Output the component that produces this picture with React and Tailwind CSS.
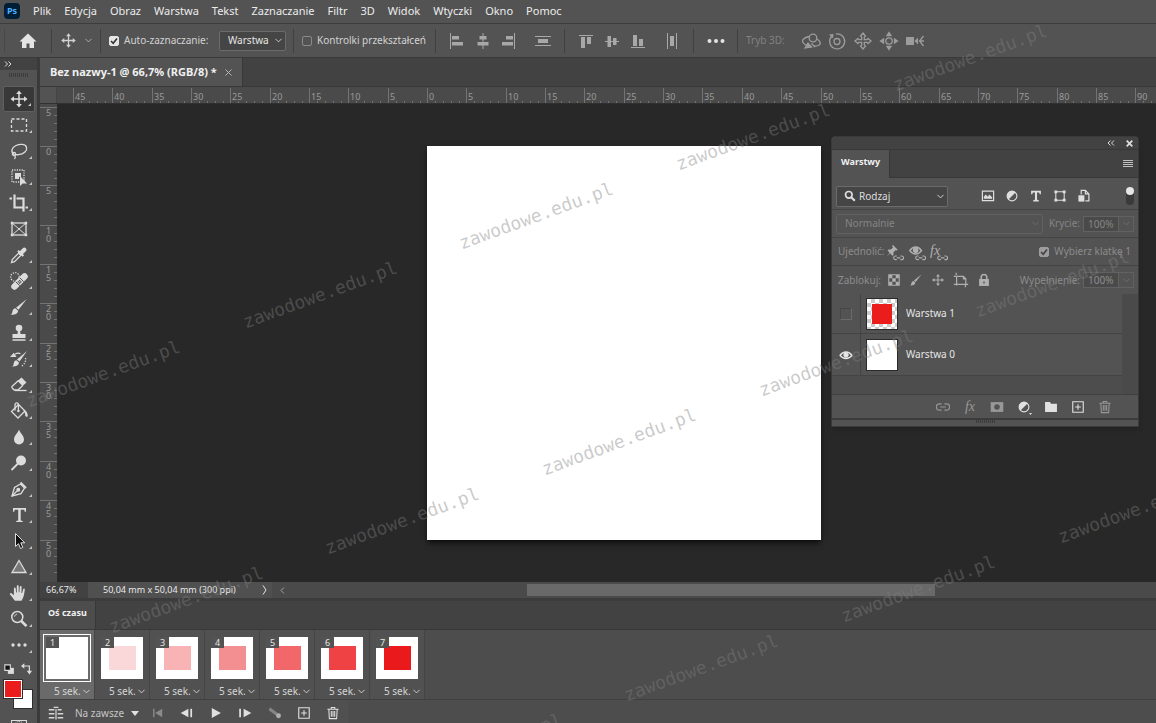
import { ChevronDown } from 'lucide-react'

const menuItems = ['Plik', 'Edycja', 'Obraz', 'Warstwa', 'Tekst', 'Zaznaczanie', 'Filtr', '3D', 'Widok', 'Wtyczki', 'Okno', 'Pomoc']

const frames = [
  { id: 1, color: '#ffffff' },
  { id: 2, color: '#fad7d8' },
  { id: 3, color: '#f8b3b5' },
  { id: 4, color: '#f48f91' },
  { id: 5, color: '#f2686a' },
  { id: 6, color: '#ee4244' },
  { id: 7, color: '#ea1a1c' },
]

const watermarks = [
  [970, 58], [753, 137], [536, 216], [320, 295], [103, 374],
  [1052, 284], [836, 363], [619, 442], [402, 521], [186, 600],
  [1135, 510], [918, 589], [701, 668], [485, 747],
]

function Icon({ size = 20, children }) {
  return (
    <svg width={size} height={size} viewBox="0 0 20 20" fill="none" stroke="currentColor" strokeWidth="1.3" className="shrink-0" aria-hidden="true">
      {children}
    </svg>
  )
}

function Chevron({ className = '' }) {
  return <ChevronDown size={11} strokeWidth={2} className={`shrink-0 pointer-events-none ${className}`} />
}

const moveIcon = (
  <Icon>
    <path d="M10 4v12M4 10h12" strokeWidth="1.5" />
    <path d="M10 1.5 12.8 5H7.2zM10 18.5 12.8 15H7.2zM1.5 10 5 7.2v5.6zM18.5 10 15 7.2v5.6z" fill="currentColor" stroke="none" />
  </Icon>
)

const brushIcon = (
  <Icon>
    <path d="M17.8 2 9.5 12.8 7 10.7z" fill="currentColor" stroke="none" />
    <path d="M6.3 11.3l2.8 2.4c-.2 3-3.2 4.3-7.6 4 2-1 1.6-2.7 2.2-4.3.5-1.2 1.5-1.9 2.6-2.1z" fill="currentColor" stroke="none" />
  </Icon>
)

const tools = [
  { name: 'Przesunięcie', active: true, icon: moveIcon },
  { name: 'Zaznaczanie prostokątne', icon: <Icon><rect x="2.5" y="4" width="15" height="12" strokeDasharray="3 2" /></Icon> },
  { name: 'Lasso', icon: <Icon><path d="M5 13.4C1.5 11 2.5 6.5 7 4.5s9.5-1.500 10.500 1.800-2.500 7-8 7.400c-1.500.1-3-.1-4-.4" /><circle cx="5" cy="13" r="1.6" /><path d="M5.800 14.300c.9 1.200.6 2.600-.3 3.700" /></Icon> },
  { name: 'Zaznaczanie obiektów', icon: <Icon><rect x="3" y="3" width="12" height="12" strokeDasharray="1.2 1.2" /><path d="M6 6h6v5l-2-1.500V12H6z" fill="currentColor" stroke="none" /><path d="M11 9v10l2.600-2.500H18z" fill="currentColor" stroke="none" /></Icon> },
  { name: 'Kadrowanie', icon: <Icon><path d="M5.500 1.500v13h9M0.500 5.500h2.500M7.500 5.500h7v13M16.500 14.500h2.500" strokeWidth="2.2" /></Icon> },
  { name: 'Ramka', plain: true, icon: <Icon><rect x="3" y="4" width="14" height="12" /><path d="M3 4l14 12M17 4 3 16" strokeWidth="1" /><path d="M1.800 2.800h2.500v2.500H1.800zM15.700 2.800h2.500v2.500h-2.500zM1.800 14.700h2.500v2.500H1.800zM15.700 14.700h2.500v2.500h-2.500z" fill="currentColor" stroke="none" /></Icon> },
  { name: 'Kroplomierz', icon: <Icon><path d="M2.500 17.500l.8-3 6.400-6.400 2.200 2.200-6.400 6.400z" /><path d="M9 5.800 14.300 11" strokeWidth="2.2" /><path d="M11.800 8.200 15.300 4.700" strokeWidth="4.2" strokeLinecap="round" /></Icon> },
  { name: 'Punktowy pędzel korygujący', icon: <Icon><circle cx="6" cy="6" r="4.3" strokeDasharray="1.2 1.3" /><path d="M5.500 15.500 15.500 5.500" strokeWidth="6.5" strokeLinecap="round" /><path d="M6.800 10.800l4 4M10.800 6.800l4 4" stroke="#535353" strokeWidth="1" /><path d="M9.300 10.800h.1M11.800 10.800h.1M10.600 9.600h.1M10.600 12h.1" stroke="#535353" strokeWidth="1.3" strokeLinecap="square" /></Icon> },
  { name: 'Pędzel', icon: brushIcon },
  { name: 'Stempel', icon: <Icon><circle cx="10" cy="5" r="3.3" fill="currentColor" stroke="none" /><path d="M9 7h2l.5 4h5v4h-13v-4h5zM3.500 16.300h13v1.500h-13z" fill="currentColor" stroke="none" /></Icon> },
  { name: 'Pędzel historii', icon: <Icon><path d="M18 2 10.500 12.500 8 10.500z" fill="currentColor" stroke="none" /><path d="M7.400 11.200l2.600 2.200c-.2 3-2.800 4.300-7 4.100 2-1 1.400-2.700 2-4.300.4-1.200 1.300-1.900 2.400-2z" fill="currentColor" stroke="none" /><path d="M1 8 4.800 3.800 7.500 8z" fill="currentColor" stroke="none" /><path d="M6 5.300c2-1.300 4-1.300 5.500-.5" strokeWidth="1.2" /><path d="M16.500 9c.6 3.500-1 6.600-4.500 8.500" strokeDasharray="1.2 1.5" /></Icon> },
  { name: 'Gumka', icon: <Icon><path d="M8.500 6 12.500 2.500 17.500 7.500 13.500 11z" fill="currentColor" stroke="none" /><path d="M9.500 5.500 3.200 11.200c-.6.600-.6 1.200 0 1.800l2 2h3.800l5-4.700" /><path d="M6 15.500h11.500" /></Icon> },
  { name: 'Wiadro z farbą', icon: <Icon><path d="M9.500 3.500 2.500 10.500l6.500 6.500 7-7z" /><path d="M6 9.500V4c0-2.800 3.400-2.800 3.400 0v6" /><circle cx="9.400" cy="10" r="1.3" fill="currentColor" stroke="none" /><path d="M14.500 9c3 .5 4.500 3.300 4.200 6.500-1.600.8-3 0-2.500-2.500" fill="currentColor" stroke="none" /></Icon> },
  { name: 'Rozmywanie', icon: <Icon><path d="M10 2.500c1 3.500 5 6 5 10a5 5 0 0 1-10 0c0-4 4-6.500 5-10z" fill="currentColor" stroke="none" /></Icon> },
  { name: 'Rozjaśnianie', icon: <Icon><circle cx="12" cy="7.5" r="5" fill="currentColor" stroke="none" /><path d="M9 10.500 2.500 17" strokeWidth="1.8" /></Icon> },
  { name: 'Pióro', icon: <Icon><path d="M3 17l2.500-8.500L11.500 5l4 4-3.500 5.700z" /><path d="M3 17l5.500-5.500" /><circle cx="9.300" cy="10.700" r="1.3" fill="currentColor" /><path d="M11.500 3.500l5.500 5.500" strokeWidth="2" /></Icon> },
  { name: 'Tekst', icon: <Icon><path d="M4 3h13v3.800h-1.200l-.6-2h-3.500v10.700l2 .4V17H7.200v-1.100l2-.4V4.800H5.700l-.5 2H4z" fill="currentColor" stroke="none" /></Icon> },
  { name: 'Zaznaczanie ścieżek', icon: <Icon><path d="M6.500 2.500v13l3-2.800 2 4.800 2.300-1-2-4.700h4z" fill="#111" strokeWidth="1" /></Icon> },
  { name: 'Trójkąt', icon: <Icon><path d="M10 3.500 17 15.500H3z" fill="#777" /></Icon> },
  { name: 'Rączka', icon: <Icon><path d="M6 17.800c-1.800-2-3.300-4.500-5-6.300-.6-.8.500-1.900 1.500-1.300l2.400 2V5.500c0-1.200 1.700-1.200 1.800 0l.4 4h.7V3.300c0-1.300 1.900-1.300 1.900 0v6h.7l.4-5.500c.1-1.200 1.900-1.100 1.800.1l-.2 6h.7l1-3.700c.4-1.100 1.900-.8 1.700.4-.5 3.700-.8 7.900-3.300 11.200z" fill="currentColor" stroke="none" /></Icon> },
  { name: 'Lupka', icon: <Icon><circle cx="8.3" cy="8" r="5.5" strokeWidth="1.5" /><path d="M5.600 7.600c.2-1.400 1.200-2.300 2.500-2.400" strokeWidth="1" /><path d="M12.300 12 17.500 17.200" strokeWidth="2.6" /></Icon> },
  { name: 'Więcej narzędzi', icon: <Icon><g fill="currentColor" stroke="none"><circle cx="4" cy="10" r="1.7" /><circle cx="10" cy="10" r="1.7" /><circle cx="16" cy="10" r="1.7" /></g></Icon> },
]

const alignGroupA = [
  { name: 'Wyrównaj do lewej', icon: <Icon><path d="M3.500 2v16" strokeWidth="1" /><path d="M5 5h7v3.500H5zM5 11h11v3.500H5z" fill="currentColor" stroke="none" /></Icon> },
  { name: 'Wyśrodkuj w poziomie', icon: <Icon><path d="M10 2v16" strokeWidth="1" /><path d="M6.500 5h7v3.500h-7zM4.500 11h11v3.500h-11z" fill="currentColor" stroke="none" /></Icon> },
  { name: 'Wyrównaj do prawej', icon: <Icon><path d="M15.500 2v16" strokeWidth="1" /><path d="M7 5h7v3.500H7zM3 11h11v3.500H3z" fill="currentColor" stroke="none" /></Icon> },
]

const alignGroupB = [
  { name: 'Wyrównaj do góry', icon: <Icon><path d="M3 4.500h14" strokeWidth="1" /><path d="M5 6h4v11H5zM11 6h4v7h-4z" fill="currentColor" stroke="none" /></Icon> },
  { name: 'Wyśrodkuj w pionie', icon: <Icon><path d="M3 10.500h14" strokeWidth="1" /><path d="M5.500 5h3.500v11H5.500zM11 7h3.500v7H11z" fill="currentColor" stroke="none" /></Icon> },
  { name: 'Wyrównaj do dołu', icon: <Icon><path d="M3 16.500h14" strokeWidth="1" /><path d="M5 4h4v11H5zM11 8h4v7h-4z" fill="currentColor" stroke="none" /></Icon> },
]

const icons3d = [
  { name: 'Obrót 3D', icon: <Icon><circle cx="12" cy="7" r="3.8" /><path d="M8 5.500C3 6.500.5 9 2 11.500c1 1.600 3 2.600 5 3M13.500 15c4 .3 6.500-1.500 5.500-4-.4-1-1.400-2-2.700-2.800M10.500 12.500 14 16" /><path d="M4 17l3-5 3.500 4z" fill="currentColor" /></Icon> },
  { name: 'Obracanie 3D', icon: <Icon><circle cx="10" cy="10.500" r="3" /><path d="M4.500 5.500A7.500 7.500 0 1 0 9 3" /><path d="M2 3.500 6.500 3 6 7.500z" fill="currentColor" stroke="none" /></Icon> },
  { name: 'Przeciąganie 3D', icon: <Icon><path d="M10 2 12.500 5 11.300 6v2.700H14L15 7.500l3 2.500-3 2.500-1-1.200h-2.700V14l1.200 1-2.500 3L7.500 15l1.200-1v-2.700H6L5 12.500 2 10 5 7.500l1 1.200h2.700V6L7.500 5z" /></Icon> },
  { name: 'Przesuwanie 3D', icon: <Icon><circle cx="10" cy="10" r="3.2" /><path d="M10 1.500 12 4.500H8zM10 18.500l2-3H8zM1.500 10l3-2v4zM18.500 10l-3-2v4z" fill="currentColor" /></Icon> },
  { name: 'Kamera 3D', icon: <Icon><path d="M1 6h8v8H1zM9.500 10 13 6.500v7z" fill="currentColor" stroke="none" /><path d="M18.500 5 14.500 10l4 5M15 10h4" /></Icon> },
]

// ruler zero lies on the document edge, one step is five millimetres
const rulerStep = 39.35
const horizontalMarks = Array.from({ length: 28 }, (_, i) => i - 9)
const verticalMarks = Array.from({ length: 12 }, (_, i) => i - 1)

function HorizontalRuler() {
  return (
    <div className="h-[17px] flex bg-[#4a4a4a] border-b border-[#303030] overflow-hidden">
      <div className="w-[17px] shrink-0 bg-[#535353] border-r border-[#444]" />
      <svg width="100%" height="17" className="flex-1 overflow-hidden text-[#9a9a9a]" aria-hidden="true">
        {horizontalMarks.map(n => {
          const x = Math.round(370 + n * rulerStep)
          return (
            <g key={n}>
              <path d={`M${x + 0.5} 1v16`} stroke="#737373" />
              {[1, 2, 3, 4].map(k => (
                <path key={k} d={`M${Math.round(x + k * 7.9) + 0.5} 14v3`} stroke="#737373" />
              ))}
              <text x={x + 2} y="13" fontSize="9" fill="currentColor">{Math.abs(n * 5)}</text>
            </g>
          )
        })}
      </svg>
    </div>
  )
}

function VerticalRuler() {
  return (
    <svg width="17" height="100%" className="shrink-0 bg-[#4a4a4a] text-[#9a9a9a]" aria-hidden="true">
      {verticalMarks.map(n => {
        const y = Math.round(42 + n * rulerStep)
        const digits = String(Math.abs(n * 5)).split('')
        return (
          <g key={n}>
            <path d={`M0 ${y + 0.5}h17`} stroke="#737373" />
            {[1, 2, 3, 4].map(k => (
              <path key={k} d={`M14 ${Math.round(y + k * 7.9) + 0.5}h3`} stroke="#737373" />
            ))}
            {n < 11 && (
              <text y={y + 9} fontSize="9" fill="currentColor">
                {digits.map((digit, i) => <tspan key={i} x="6" dy={i * 8}>{digit}</tspan>)}
              </text>
            )}
          </g>
        )
      })}
    </svg>
  )
}

function Separator() {
  return <div className="w-px h-6 bg-[#404040] shrink-0" />
}

function IconButton({ label, className = '', children }) {
  return (
    <button aria-label={label} className={`flex items-center justify-center shrink-0 ${className}`}>
      {children}
    </button>
  )
}

function Checkbox({ id, checked }) {
  return (
    <span className="relative size-[10px] shrink-0">
      <input
        id={id}
        type="checkbox"
        defaultChecked={checked}
        className="peer absolute inset-0 appearance-none size-[10px] rounded-xs border border-[#8a8a8a] checked:bg-[#e6e6e6] checked:border-[#e6e6e6]"
      />
      <svg viewBox="0 0 10 10" className="absolute inset-0 pointer-events-none hidden peer-checked:block" fill="none" stroke="#333" strokeWidth="1.6" aria-hidden="true">
        <path d="M2 5l2.200 2.300L8 2.500" />
      </svg>
    </span>
  )
}

function MenuBar() {
  return (
    <nav className="h-6 shrink-0 flex items-center pl-1 pb-[2px] border-b border-[#3c3c3c] text-[11px] text-[#ececec]">
      <span className="size-4 rounded-sm bg-[#001e36] text-[#4fb0ff] text-[9px] font-bold flex items-center justify-center">Ps</span>
      <div className="flex gap-[13px] pl-[13px]">
        {menuItems.map(item => (
          <button key={item} className="leading-4">{item}</button>
        ))}
      </div>
    </nav>
  )
}

function OptionsBar() {
  return (
    <div className="h-[34px] shrink-0 flex items-center border-b border-[#393939] text-[10px] text-[#d2d2d2] overflow-hidden">
      <div className="w-px h-6 ml-1 bg-[#474747]" />
      <IconButton label="Ekran główny" className="w-[46px] text-[#e3e3e3]">
        <Icon><path d="M10 2.500 1.500 10.500H4V17h4.500v-4.500h3V17H16v-6.500h2.500z" fill="currentColor" stroke="none" /></Icon>
      </IconButton>
      <Separator />
      <div className="w-12 flex items-center justify-between pl-2 pr-[6px] shrink-0">
        <Icon size={17}>{moveIcon.props.children}</Icon>
        <Chevron className="text-[#b0b0b0]" />
      </div>
      <Separator />
      <div className="w-48 flex items-center pl-2 shrink-0">
        <Checkbox id="auto-select" checked />
        <label htmlFor="auto-select" className="pl-[5px] flex-1 whitespace-nowrap">Auto-zaznaczanie:</label>
        <div className="relative w-[67px] mr-[7px] flex items-center">
          <select aria-label="Cel zaznaczania" className="appearance-none w-full h-5 pl-2 rounded-xs bg-[#454545] border border-[#6b6b6b] text-[#e6e6e6]">
            <option>Warstwa</option>
          </select>
          <Chevron className="absolute right-[2px]" />
        </div>
      </div>
      <Separator />
      <div className="w-[141px] flex items-center pl-2 shrink-0">
        <Checkbox id="transform" />
        <label htmlFor="transform" className="pl-[5px] whitespace-nowrap">Kontrolki przekształceń</label>
      </div>
      <Separator />
      <div className="flex items-center pl-2 w-32 shrink-0 text-[#a8a8a8]">
        {alignGroupA.map(a => (
          <IconButton key={a.name} label={a.name} className="w-[26px]">{a.icon}</IconButton>
        ))}
        <IconButton label="Rozłóż w pionie" className="flex-1">
          <Icon><path d="M2 5.500h16M2 14.500h16" strokeWidth="1" /><path d="M5 8h10v4H5z" fill="currentColor" stroke="none" /></Icon>
        </IconButton>
      </div>
      <Separator />
      <div className="flex items-center pl-2 w-32 shrink-0 text-[#a8a8a8]">
        {alignGroupB.map(a => (
          <IconButton key={a.name} label={a.name} className="w-[26px]">{a.icon}</IconButton>
        ))}
        <IconButton label="Rozłóż w poziomie" className="flex-1">
          <Icon><path d="M5.500 2v16M14.500 2v16" strokeWidth="1" /><path d="M8 5h4v10H8z" fill="currentColor" stroke="none" /></Icon>
        </IconButton>
      </div>
      <Separator />
      <IconButton label="Więcej opcji" className="w-[43px] text-[#e3e3e3]">
        <Icon><g fill="currentColor" stroke="none"><circle cx="3.500" cy="10" r="2" /><circle cx="10" cy="10" r="2" /><circle cx="16.500" cy="10" r="2" /></g></Icon>
      </IconButton>
      <Separator />
      <span className="w-[60px] pl-2 text-[#818181] shrink-0">Tryb 3D:</span>
      <div className="flex text-[#9c9c9c]">
        {icons3d.map(a => (
          <IconButton key={a.name} label={a.name} className="w-[26px]">{a.icon}</IconButton>
        ))}
      </div>
    </div>
  )
}

function Toolbar() {
  return (
    <aside className="w-[38px] shrink-0 flex flex-col text-[#dcdcdc] border-r border-[#3a3a3a] overflow-hidden">
      <div className="h-3 shrink-0 bg-[#424242] flex items-center pl-1">
        <svg width="8" height="6" viewBox="0 0 8 6" fill="none" stroke="currentColor" aria-hidden="true"><path d="M1 .5 3.500 3 1 5.500M4.500 .5 7 3 4.500 5.500" /></svg>
      </div>
      <div className="h-4 shrink-0 flex gap-px justify-center pt-[3px]">
        {Array.from({ length: 10 }, (_, i) => <div key={i} className="w-px h-1 bg-[#3b3b3b]" />)}
      </div>
      {tools.map(tool => (
        <button
          key={tool.name}
          aria-label={tool.name}
          className={`relative h-[26px] shrink-0 ml-[3px] mr-[2px] flex items-center justify-center ${tool.active ? 'bg-[#383838] rounded-xs border border-[#606060]' : ''}`}
        >
          {tool.icon}
          {!tool.plain && (
            <svg width="3" height="3" viewBox="0 0 3 3" className="absolute right-[3px] bottom-[5px]" fill="#c4c4c4" aria-hidden="true"><path d="M3 0v3H0z" /></svg>
          )}
        </button>
      ))}
      <div className="flex h-[22px] shrink-0 items-center gap-[6px] pl-1">
        <Icon size={11}><path d="M7 7h11v11H7z" fill="currentColor" stroke="none" /><path d="M1.500 1.500h10v10h-10z" fill="#111" strokeWidth="2" /></Icon>
        <Icon size={12}><path d="M4 5h10v10" strokeWidth="2" /><path d="M5.500 .5v9L0 5zM9.500 13h9L14 19z" fill="currentColor" stroke="none" /></Icon>
      </div>
      <div className="relative h-[29px] shrink-0">
        <button aria-label="Kolor tła" className="absolute left-[13px] top-[9px] size-5 bg-white border border-[#2e2e2e]" />
        <button aria-label="Kolor pierwszego planu" className="absolute left-1 top-0 size-[18px] bg-[#ea1c1c] border border-white outline outline-[#2e2e2e]" />
      </div>
      <button aria-label="Szybka maska" className="mt-[11px] mx-auto w-4 h-3 shrink-0 border border-[#dcdcdc] flex justify-center">
        <span className="size-2 rounded-full border border-dotted border-[#dcdcdc]" />
      </button>
    </aside>
  )
}

function TabStrip() {
  return (
    <div className="h-[29px] shrink-0 bg-[#424242] border-b border-[#383838] flex">
      <div className="flex items-center gap-2 bg-[#535353] px-[10px] text-[11px] font-bold text-[#f0f0f0] border-r border-[#383838]">
        <span>Bez nazwy-1 @ 66,7% (RGB/8) *</span>
        <button aria-label="Zamknij">
          <svg width="7" height="7" viewBox="0 0 7 7" stroke="#b5b5b5" aria-hidden="true"><path d="M.5 .5 6.500 6.500M6.500 .5 .5 6.500" /></svg>
        </button>
      </div>
    </div>
  )
}

function StatusBar() {
  return (
    <div className="h-[19px] shrink-0 flex items-center bg-[#4a4a4a] border-b-3 border-[#3c3c3c] text-[9px] text-[#e8e8e8]">
      <span className="w-12 pl-[6px] h-full bg-[#424242] leading-4">66,67%</span>
      <div className="w-[184px] h-full flex items-center justify-between pl-[15px] pr-[5px] bg-[#505050]">
        <span>50,04 mm x 50,04 mm (300 ppi)</span>
        <svg width="5" height="10" viewBox="0 0 5 10" fill="none" stroke="currentColor" aria-hidden="true"><path d="M1 .5 4 5 1 9.500" /></svg>
      </div>
      <svg width="5" height="7" viewBox="0 0 5 7" fill="none" stroke="#a0a0a0" className="ml-2" aria-hidden="true"><path d="M4 .5 1 3.500 4 6.500" /></svg>
      <div className="flex-1 pl-[242px] pr-[221px]">
        <div className="h-3 bg-[#696969]" />
      </div>
    </div>
  )
}

function Timeline() {
  return (
    <section className="shrink-0 h-[122px] flex flex-col bg-[#4d4d4d] text-[10px] text-[#d6d6d6]">
      <div className="h-[29px] shrink-0 bg-[#424242] border-b border-[#383838] flex">
        <div className="bg-[#4d4d4d] px-2 pb-1 flex items-center text-[9px] font-bold text-[#f0f0f0] border-r border-[#383838]">Oś czasu</div>
      </div>
      <div className="h-[70px] shrink-0 flex border-b border-[#404040]">
        {frames.map(frame => (
          <div key={frame.id} className={`w-[55px] shrink-0 pt-1 flex flex-col items-start pl-[3px] border-r border-[#454545] ${frame.id === 1 ? 'bg-[#6a6a6a]' : 'bg-[#515151]'}`}>
            <button aria-label={`Klatka ${frame.id}`} className={`relative size-12 flex items-center justify-center ${frame.id === 1 ? 'border border-white' : ''}`}>
              <span className="size-[42px] bg-white flex items-center justify-center">
                <span className="w-[27px] h-6" style={{ backgroundColor: frame.color }} />
              </span>
              <span className={`absolute w-[13px] h-[11px] bg-[#535353] text-[9px] text-[#e6e6e6] leading-[11px] ${frame.id === 1 ? 'left-[2px] top-[2px]' : 'left-[3px] top-[3px]'}`}>{frame.id}</span>
            </button>
            <button className="flex items-center pl-[11px] pt-[3px] leading-3">5 sek.<Chevron /></button>
          </div>
        ))}
      </div>
      <div className="flex-1 flex">
        <div className="w-[308px] flex items-center pl-2 pt-[3px] bg-[#505050]">
          <IconButton label="Oś czasu wideo">
            <Icon size={16}><path d="M1 6h7M1 11h7M1 16h7M12 6h5M12 11h7M12 16h7" strokeWidth="2" /><path d="M10 5v13M7 3h6" strokeWidth="1.5" /></Icon>
          </IconButton>
          <div className="relative flex items-center pl-[11px] w-[75px]">
            <select aria-label="Powtarzanie" className="appearance-none w-full text-[#c6c6c6]">
              <option>Na zawsze</option>
            </select>
            <svg width="8" height="5" viewBox="0 0 8 5" className="absolute right-0 pointer-events-none" fill="#e0e0e0" aria-hidden="true"><path d="M0 0h8L4 5z" /></svg>
          </div>
          <div className="flex items-center justify-between flex-1 pl-3 pr-2 text-[#e0e0e0]">
            <IconButton label="Pierwsza klatka" className="text-[#8a8a8a]"><Icon size={14}><path d="M4 4v12" strokeWidth="2" /><path d="M16 4v12L6 10z" fill="currentColor" stroke="none" /></Icon></IconButton>
            <IconButton label="Poprzednia klatka"><Icon size={14}><path d="M16 4v12" strokeWidth="2.5" /><path d="M12 4v12L1 10z" fill="currentColor" stroke="none" /></Icon></IconButton>
            <IconButton label="Odtwórz"><Icon size={14}><path d="M4 3v14l13-7z" fill="currentColor" stroke="none" /></Icon></IconButton>
            <IconButton label="Następna klatka"><Icon size={14}><path d="M3 4v12" strokeWidth="2.5" /><path d="M8 4v12l11-6z" fill="currentColor" stroke="none" /></Icon></IconButton>
            <IconButton label="Animacja pośrednia" className="text-[#b0b0b0]"><Icon size={14}><path d="M2 4l11 8" strokeWidth="4.5" stroke="#858585" /><circle cx="15" cy="14" r="3.5" fill="currentColor" stroke="none" /></Icon></IconButton>
            <IconButton label="Powiel klatkę"><Icon size={14}><path d="M2.500 2.500h15v15h-15zM10 6v8M6 10h8" strokeWidth="1.6" /></Icon></IconButton>
            <IconButton label="Usuń klatkę"><TrashIcon /></IconButton>
          </div>
        </div>
      </div>
    </section>
  )
}

function TrashIcon() {
  return <Icon size={14}><path d="M2 4.500h16M7.500 4V2h5v2M4 4.500l.8 13.500h10.400L16 4.500M7.600 7v8.500M10 7v8.500M12.400 7v8.500" strokeWidth="1.5" /></Icon>
}

function HalfCircle() {
  return <Icon size={14}><circle cx="10" cy="10" r="7" strokeWidth="1.6" /><path d="M15 5 5 15A7 7 0 0 1 15 5z" fill="currentColor" stroke="none" /></Icon>
}

const linkBadge = <path d="M12 14.500h-1.500a2 2 0 0 0 0 4H12M16 14.500h1.500a2 2 0 0 1 0 4H16M12 16.500h4" strokeWidth="1.2" />

function PercentField({ id, label }) {
  return (
    <div className="flex items-center gap-[3px]">
      <label htmlFor={id}>{label}</label>
      <div className="flex h-4 border border-[#616161] items-center w-[51px]">
        <input id={id} defaultValue="100%" className="w-[35px] h-full pl-1 bg-[#4a4a4a] border-r border-[#616161]" />
        <Chevron className="mx-auto text-[#707070]" />
      </div>
    </div>
  )
}

function LayersPanel() {
  return (
    <section className="absolute right-[17px] top-8 w-[308px] bg-[#535353] border border-[#3a3a3a] rounded-t-sm text-[10px] text-[#8c8c8c] shadow-md">
      <div className="h-[13px] bg-[#424242] border-b border-[#383838] rounded-t-sm flex items-center justify-end gap-[11px] pr-[5px] text-[#dcdcdc]">
        <svg width="8" height="6" viewBox="0 0 8 6" fill="none" stroke="currentColor" aria-hidden="true"><path d="M3.500 .5 1 3 3.500 5.500M7 .5 4.500 3 7 5.500" /></svg>
        <svg width="7" height="7" viewBox="0 0 7 7" stroke="currentColor" strokeWidth="1.8" aria-hidden="true"><path d="M.7 .7 6.300 6.300M6.300 .7 .7 6.300" /></svg>
      </div>
      <div className="h-7 flex justify-between bg-[#424242]">
        <div className="bg-[#535353] px-[9px] pb-1 flex items-center font-bold text-[#f0f0f0] text-[9px] border-r border-[#383838]">Warstwy</div>
        <div className="flex-1 flex items-center justify-end border-b border-[#383838] pr-[5px]">
          <svg width="10" height="8" viewBox="0 0 10 8" stroke="#c0c0c0" aria-hidden="true"><path d="M0 .5h10M0 2.500h10M0 4.500h10M0 6.500h10" /></svg>
        </div>
      </div>
      <div className="h-8 flex items-center pl-1 pt-[5px] border-b border-[#444] text-[#dedede]">
        <div className="relative flex items-center w-[112px] mr-[33px]">
          <svg width="12" height="12" viewBox="0 0 20 20" className="absolute left-2" fill="none" stroke="currentColor" strokeWidth="2.8" aria-hidden="true"><circle cx="8" cy="8" r="5.5" /><path d="M12 12 18 18" strokeWidth="3.5" /></svg>
          <select aria-label="Filtr warstw" className="appearance-none w-full h-[21px] pl-[22px] bg-[#454545] border border-[#6b6b6b] rounded-xs">
            <option>Rodzaj</option>
          </select>
          <Chevron className="absolute right-[2px]" />
        </div>
        <div className="flex gap-[10px]">
          <IconButton label="Warstwy pikselowe"><Icon size={14}><path d="M2 3h16v13.500H2z" strokeWidth="1.7" /><path d="M4 14V11l3-3 2.500 3L12 8l4 4v2z" fill="currentColor" stroke="none" /></Icon></IconButton>
          <IconButton label="Warstwy dopasowania"><HalfCircle /></IconButton>
          <IconButton label="Warstwy tekstowe"><Icon size={14}><path d="M3 2.500h14v5h-1.700L14.500 5H11.500v10.500l2.500.6V18H6v-1.900l2.500-.6V5H5.500l-.8 2.500H3z" fill="currentColor" stroke="none" /></Icon></IconButton>
          <IconButton label="Warstwy kształtu"><Icon size={14}><path d="M4 4h12v12H4z" strokeWidth="1.5" /><path d="M2 2h4v4H2zM14 2h4v4h-4zM2 14h4v4H2zM14 14h4v4h-4z" fill="currentColor" stroke="none" /></Icon></IconButton>
          <IconButton label="Obiekty inteligentne"><Icon size={14}><path d="M6 8V2h6l5 5v10h-5M12 2v5h5" strokeWidth="1.7" /><path d="M2 9h8.500v9H2z" fill="currentColor" stroke="none" /></Icon></IconButton>
        </div>
        <button aria-label="Włącz filtrowanie" className="ml-auto mr-1 w-2 h-[18px] flex items-start rounded-full bg-[#3a3a3a]">
          <span className="size-2 rounded-full bg-[#e6e6e6]" />
        </button>
      </div>
      <div className="h-7 flex items-center justify-between px-1 border-b border-[#444] text-[#858585]">
        <div className="relative flex items-center w-[207px]">
          <select aria-label="Tryb mieszania" className="appearance-none w-full h-5 pl-2 border border-[#616161] rounded-xs">
            <option>Normalnie</option>
          </select>
          <Chevron className="absolute right-[2px] text-[#707070]" />
        </div>
        <PercentField id="opacity" label="Krycie:" />
      </div>
      <div className="h-7 flex items-center pl-[6px] pr-[7px] border-b border-[#444]">
        <span className="w-12">Ujednolić:</span>
        <div className="flex gap-1 text-[#b0b0b0]">
          <IconButton label="Ujednolić położenie"><Icon size={18}><path d="M7.500 2 13 7.500l-1.300.8-1.200-.3-2.300 2.500.1 2.800-1.200.8-2.600-2.600L1 15l3-4.300L1.800 8.400l.9-1.200 2.800.1L7.700 5l-.8-1.400z" fill="currentColor" stroke="none" />{linkBadge}</Icon></IconButton>
          <IconButton label="Ujednolić widoczność"><Icon size={18}><path d="M2 8.500c3.500-5.300 9.500-5.300 13 0-3.500 5-9.500 5-13 0z" strokeWidth="1.7" /><circle cx="8.5" cy="8" r="2.5" fill="currentColor" />{linkBadge}</Icon></IconButton>
          <IconButton label="Ujednolić styl" className="relative"><span className="absolute left-0 top-0 italic text-[14px] leading-4 font-['Liberation_Serif',serif]">fx</span><Icon size={18}>{linkBadge}</Icon></IconButton>
        </div>
        <div className="ml-auto flex items-center gap-[5px]">
          <span className="opacity-50 flex"><Checkbox id="propagate" checked /></span>
          <label htmlFor="propagate">Wybierz klatkę 1</label>
        </div>
      </div>
      <div className="h-7 flex items-center pl-[6px] pr-1">
        <span className="w-[49px]">Zablokuj:</span>
        <div className="flex gap-2 text-[#b0b0b0]">
          <IconButton label="Zablokuj przezroczystość"><Icon size={14}><path d="M2.500 2.500h15v15h-15z" strokeWidth="1.5" /><path d="M3 3h4.500v4.500H3zM12.500 3H17v4.500h-4.500zM7.500 7.500h5v5h-5zM3 12.500h4.500V17H3zM12.500 12.500H17V17h-4.500z" fill="currentColor" stroke="none" /></Icon></IconButton>
          <IconButton label="Zablokuj piksele"><Icon size={14}>{brushIcon.props.children}</Icon></IconButton>
          <IconButton label="Zablokuj położenie"><Icon size={14}>{moveIcon.props.children}</Icon></IconButton>
          <IconButton label="Zablokuj obszary robocze"><Icon size={16}><path d="M4 1v3M1 5.500h3M4.500 5.500H13l3 3V17M4.500 5.500V17M1 15.500h18M15.500 17v2M13 5.500v3h3" strokeWidth="1.5" /></Icon></IconButton>
          <IconButton label="Zablokuj wszystko"><Icon size={14}><path d="M6 9V6a4 4 0 0 1 8 0v3" strokeWidth="2.2" /><path d="M3 8.500h14v10H3z" fill="currentColor" stroke="none" /><path d="M10 12v3" stroke="#535353" strokeWidth="2" /></Icon></IconButton>
        </div>
        <div className="ml-auto"><PercentField id="fill" label="Wypełnienie:" /></div>
      </div>
      <div className="h-[100px] flex bg-[#4d4d4d] text-[#e6e6e6]">
        <div className="flex-1">
          <div className="h-10 flex items-center bg-[#535353] border-b border-[#444]">
            <div className="w-[29px] h-full flex items-center justify-center border-r border-[#444]">
              <button aria-label="Pokaż warstwę 1" className="size-3 border border-[#474747] border-r-[#6b6b6b] border-b-[#6b6b6b]" />
            </div>
            <div className="ml-[5px] size-8 border border-[#2b2b2b] flex items-center justify-center bg-white bg-[conic-gradient(#ccc_25%,#fff_0_50%,#ccc_0_75%,#fff_0)] bg-size-[8px_8px]">
              <div className="size-5 bg-[#ea1c1c]" />
            </div>
            <span className="pl-2">Warstwa 1</span>
          </div>
          <div className="h-[42px] flex items-center bg-[#535353] border-b border-[#444]">
            <button aria-label="Ukryj warstwę 0" className="w-[29px] h-full flex items-center justify-center border-r border-[#444]">
              <Icon size={14}><path d="M1.500 10.500c4.500-6.500 12.500-6.500 17 0-4.500 6-12.500 6-17 0z" strokeWidth="2" /><circle cx="10" cy="10" r="3.2" fill="currentColor" /></Icon>
            </button>
            <div className="ml-[5px] size-8 border border-[#2b2b2b] bg-white" />
            <span className="pl-2">Warstwa 0</span>
          </div>
        </div>
        <div className="w-4 bg-[#4a4a4a]" />
      </div>
      <div className="h-6 flex items-center justify-end gap-[13px] pr-[26px] border-t border-[#404040] text-[#e0e0e0]">
        <IconButton label="Połącz warstwy" className="text-[#989898]"><Icon size={14}><path d="M8 5.500H5a4.500 4.500 0 0 0 0 9h3M12 5.500h3a4.500 4.500 0 0 1 0 9h-3M6 10h8" strokeWidth="1.7" /></Icon></IconButton>
        <IconButton label="Styl warstwy" className="w-[14px] text-[#989898] italic text-[14px] leading-4 font-['Liberation_Serif',serif]">fx</IconButton>
        <IconButton label="Maska warstwy" className="text-[#989898]"><Icon size={14}><path d="M1 3h18v14H1z" fill="currentColor" stroke="none" /><circle cx="10" cy="10" r="4" fill="#535353" stroke="none" /></Icon></IconButton>
        <IconButton label="Warstwa dopasowania" className="relative">
          <HalfCircle />
          <svg width="3" height="2" viewBox="0 0 3 2" className="absolute -right-px -bottom-px" fill="currentColor" aria-hidden="true"><path d="M0 0h3L1.500 2z" /></svg>
        </IconButton>
        <IconButton label="Nowa grupa"><Icon size={14}><path d="M1.500 3h7l1.500 2.500h8.500V17h-17z" fill="currentColor" stroke="none" /></Icon></IconButton>
        <IconButton label="Nowa warstwa"><Icon size={14}><path d="M2.500 2.500h15v15h-15zM10 6v8M6 10h8" strokeWidth="1.6" /></Icon></IconButton>
        <IconButton label="Usuń warstwę" className="text-[#989898]"><TrashIcon /></IconButton>
      </div>
      <div className="h-2 border-t-2 border-[#3c3c3c] flex justify-center gap-px">
        {Array.from({ length: 10 }, (_, i) => <div key={i} className="w-px h-[3px] bg-[#3b3b3b]" />)}
      </div>
    </section>
  )
}

function Watermarks() {
  return (
    <div className="absolute inset-0 overflow-hidden pointer-events-none">
      {watermarks.map(([x, y]) => (
        <span
          key={`${x}-${y}`}
          className="absolute -translate-x-1/2 -translate-y-1/2 -rotate-20 font-['DejaVu_Sans_Mono',monospace] text-[18px] leading-6 text-[#808080]/42"
          style={{ left: x, top: y }}
        >
          zawodowe.edu.pl
        </span>
      ))}
    </div>
  )
}

export default function App() {
  return (
    <div className="relative h-screen flex flex-col overflow-hidden bg-[#535353] font-['Noto_Sans','Open_Sans',sans-serif]">
      <MenuBar />
      <OptionsBar />
      <div className="flex-1 min-h-0 flex">
        <Toolbar />
        <main className="relative flex-1 min-w-0 flex flex-col border-l-2 border-[#3a3a3a]">
          <TabStrip />
          <HorizontalRuler />
          <div className="relative flex-1 min-h-0 flex bg-[#282828]">
            <VerticalRuler />
            <div className="flex-1 pl-[370px] pt-[42px] min-h-0 overflow-hidden">
              <div className="size-[394px] bg-white shadow-md shadow-black/60" />
            </div>
            <LayersPanel />
          </div>
          <StatusBar />
          <Timeline />
        </main>
      </div>
      <Watermarks />
    </div>
  )
}
